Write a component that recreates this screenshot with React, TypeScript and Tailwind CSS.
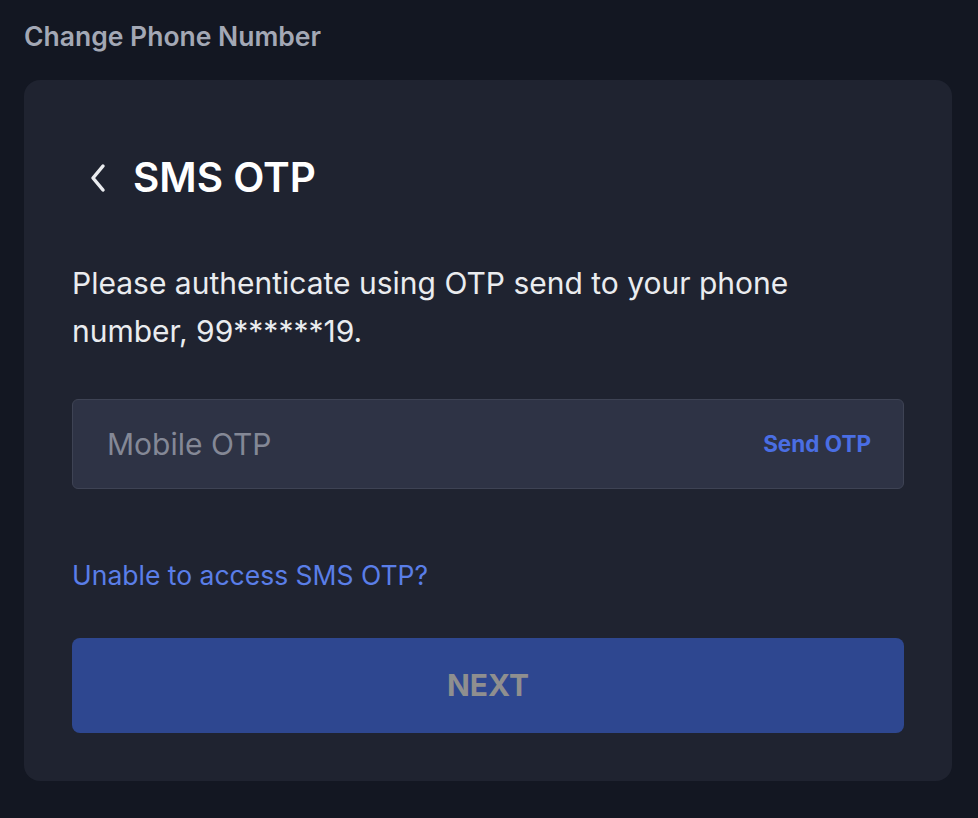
import React from "react";

export default function App() {
  return (
    <div
      className="min-h-[818px] w-full bg-[#131722] pl-6 pr-[26px] pt-5 pb-9"
      style={{ fontFamily: "Inter, 'Noto Sans', sans-serif" }}
    >
      <div className="text-[26.5px] leading-[32px] font-semibold text-[#a3a8b5]">
        Change Phone Number
      </div>
      <div className="mt-[28px] rounded-[16px] bg-[#1f2330] px-12 pt-[70px] pb-12">
        <div className="flex items-center h-[56px]">
          <svg
            width="20"
            height="30"
            viewBox="0 0 20 30"
            className="ml-[17px] mr-[24px]"
          >
            <path
              d="M14 3 L4 15 L14 27"
              fill="none"
              stroke="#eaecef"
              strokeWidth="3.5"
              strokeLinecap="round"
              strokeLinejoin="round"
            />
          </svg>
          <span className="text-[40.5px] leading-[56px] font-semibold text-white">
            SMS OTP
          </span>
        </div>
        <p className="mt-[53px] text-[30px] leading-[48px] text-[#eaecef]">
          Please authenticate using OTP send to your phone number, 99******19.
        </p>
        <div className="mt-[44px] flex h-[90px] items-center justify-between rounded-[6px] border border-[#3e4354] bg-[#2e3345] pl-[34px] pr-[32px]">
          <span className="text-[30px] text-[#848896]">Mobile OTP</span>
          <span className="text-[22.5px] font-bold text-[#4a6ee3]">
            Send OTP
          </span>
        </div>
        <div className="mt-[68px] text-[26.5px] leading-[36px] text-[#5a7ee8]">
          Unable to access SMS OTP?
        </div>
        <button className="mt-[45px] flex h-[95px] w-full items-center justify-center rounded-[8px] bg-[#2e4790] text-[30px] font-bold text-[#8f8f8f]">
          NEXT
        </button>
      </div>
    </div>
  );
}
